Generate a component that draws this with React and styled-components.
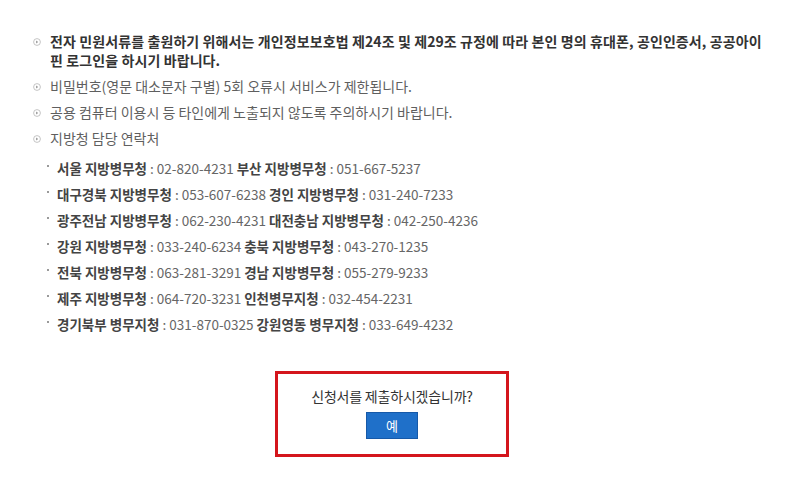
import React from 'react';
import styled, { createGlobalStyle } from 'styled-components';

const GlobalStyle = createGlobalStyle`
  html, body {
    margin: 0;
    padding: 0;
    background: #ffffff;
  }
  body {
    font-family: "Noto Sans CJK KR", "Noto Sans", sans-serif;
  }
`;

const Page = styled.div`
  width: 786px;
  height: 494px;
  box-sizing: border-box;
  padding: 32px 10px 0 33px;
  overflow: hidden;
`;

const NoticeList = styled.ul`
  list-style: none;
  margin: 0;
  padding: 0;
`;

const NoticeItem = styled.li`
  display: flex;
  align-items: flex-start;
  gap: 9px;
  margin-bottom: 7px;
  font-size: 14px;
  line-height: 19px;
  letter-spacing: ${(p) => (p.$strong ? '0.1px' : '0')};
  white-space: nowrap;
  color: ${(p) => (p.$strong ? '#333' : '#5f5f5f')};
  font-weight: ${(p) => (p.$strong ? 700 : 400)};
`;

const Bullet = styled.span`
  flex: none;
  display: flex;
  align-items: center;
  height: 19px;
`;

const ContactList = styled.ul`
  list-style: none;
  margin: 11px 0 0 0;
  padding: 0 0 0 14px;
`;

const ContactItem = styled.li`
  display: flex;
  align-items: flex-start;
  gap: 8px;
  margin-bottom: 7px;
  font-size: 13.5px;
  line-height: 19px;
  color: #666;
`;

const Dot = styled.span`
  flex: none;
  width: 2px;
  height: 2px;
  margin-top: 6px;
  background: #9a9a9a;
`;

const Office = styled.b`
  font-weight: 700;
  color: #444;
`;

const ConfirmBox = styled.div`
  width: 234px;
  height: 86px;
  box-sizing: border-box;
  margin: 37px 0 0 242px;
  border: 3px solid #d4151c;
  display: flex;
  flex-direction: column;
  align-items: center;
  padding-top: 12px;
  gap: 6px;
`;

const Question = styled.div`
  font-size: 14px;
  line-height: 20px;
  color: #333;
  letter-spacing: -0.2px;
`;

const YesButton = styled.button`
  width: 52px;
  height: 27px;
  padding: 0;
  border: 1px solid #1659a8;
  background: #1f70c9;
  color: #ffffff;
  font-family: "Noto Sans CJK KR", sans-serif;
  font-size: 13px;
  cursor: pointer;
`;

const CircleBullet = () => (
  <svg width="8" height="8" viewBox="0 0 8 8">
    <circle cx="4" cy="4" r="3.4" fill="#fff" stroke="#bdbdbd" strokeWidth="0.9" />
    <path d="M3.2 2.5 L5.1 4 L3.2 5.5 Z" fill="#8c8c8c" />
  </svg>
);

const notices = [
  {
    strong: true,
    text: (
      <>
        전자 민원서류를 출원하기 위해서는 개인정보보호법 제24조 및 제29조 규정에 따라 본인 명의 휴대폰, 공인인증서, 공공아이
        <br />
        핀 로그인을 하시기 바랍니다.
      </>
    ),
  },
  { text: '비밀번호(영문 대소문자 구별) 5회 오류시 서비스가 제한됩니다.' },
  { text: '공용 컴퓨터 이용시 등 타인에게 노출되지 않도록 주의하시기 바랍니다.' },
  { text: '지방청 담당 연락처' },
];

const contacts = [
  [['서울 지방병무청', '02-820-4231'], ['부산 지방병무청', '051-667-5237']],
  [['대구경북 지방병무청', '053-607-6238'], ['경인 지방병무청', '031-240-7233']],
  [['광주전남 지방병무청', '062-230-4231'], ['대전충남 지방병무청', '042-250-4236']],
  [['강원 지방병무청', '033-240-6234'], ['충북 지방병무청', '043-270-1235']],
  [['전북 지방병무청', '063-281-3291'], ['경남 지방병무청', '055-279-9233']],
  [['제주 지방병무청', '064-720-3231'], ['인천병무지청', '032-454-2231']],
  [['경기북부 병무지청', '031-870-0325'], ['강원영동 병무지청', '033-649-4232']],
];

export default function App() {
  return (
    <>
      <GlobalStyle />
      <Page>
        <NoticeList>
          {notices.map((n, i) => (
            <NoticeItem key={i} $strong={n.strong}>
              <Bullet>
                <CircleBullet />
              </Bullet>
              <span>{n.text}</span>
            </NoticeItem>
          ))}
        </NoticeList>
        <ContactList>
          {contacts.map((row, i) => (
            <ContactItem key={i}>
              <Dot />
              <span>
                <Office>{row[0][0]}</Office> : {row[0][1]} <Office>{row[1][0]}</Office> : {row[1][1]}
              </span>
            </ContactItem>
          ))}
        </ContactList>
        <ConfirmBox>
          <Question>신청서를 제출하시겠습니까?</Question>
          <YesButton>예</YesButton>
        </ConfirmBox>
      </Page>
    </>
  );
}
